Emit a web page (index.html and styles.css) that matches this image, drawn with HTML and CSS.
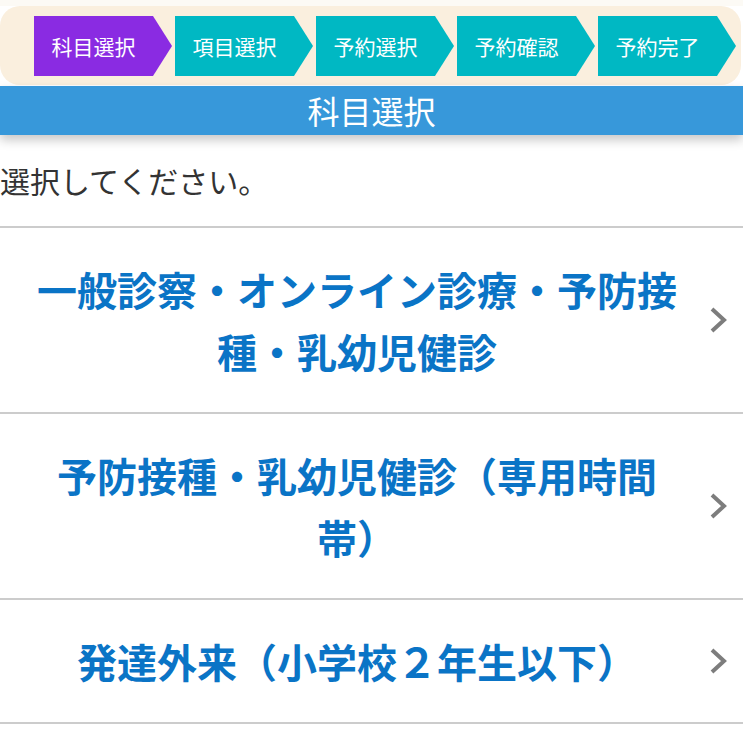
FILE: index.html
```html
<!DOCTYPE html>
<html lang="ja">
<head>
<meta charset="utf-8">
<title>科目選択</title>
<link rel="stylesheet" href="styles.css">
</head>
<body>
<div class="page">
  <div class="steps">
    <div class="step step-active">科目選択</div>
    <div class="step">項目選択</div>
    <div class="step">予約選択</div>
    <div class="step">予約確認</div>
    <div class="step">予約完了</div>
  </div>
  <div class="title-bar">科目選択</div>
  <p class="lead">選択してください。</p>
  <ul class="menu">
    <li class="menu-item">
      <span class="menu-text">一般診察・オンライン診療・予防接種・乳幼児健診</span>
      <span class="menu-arrow"><svg width="17" height="26" viewBox="0 0 17 26"><polyline points="2,2 14,13 2,24" fill="none" stroke="#7d7d7d" stroke-width="4" stroke-linejoin="miter"/></svg></span>
    </li>
    <li class="menu-item">
      <span class="menu-text">予防接種・乳幼児健診（専用時間帯）</span>
      <span class="menu-arrow"><svg width="17" height="26" viewBox="0 0 17 26"><polyline points="2,2 14,13 2,24" fill="none" stroke="#7d7d7d" stroke-width="4" stroke-linejoin="miter"/></svg></span>
    </li>
    <li class="menu-item">
      <span class="menu-text">発達外来（小学校２年生以下）</span>
      <span class="menu-arrow"><svg width="17" height="26" viewBox="0 0 17 26"><polyline points="2,2 14,13 2,24" fill="none" stroke="#7d7d7d" stroke-width="4" stroke-linejoin="miter"/></svg></span>
    </li>
  </ul>
</div>
</body>
</html>
```

FILE: styles.css
```css
* {
  box-sizing: border-box;
}
html, body {
  margin: 0;
  padding: 0;
  background: #ffffff;
}
body {
  font-family: "Noto Sans CJK JP", "Noto Sans", sans-serif;
  color: #333333;
  text-spacing-trim: space-all;
}
.page {
  background: linear-gradient(#fcfaf5 0, #fcfaf5 6px, #ffffff 6px);
  padding-top: 6px;
}
.steps {
  display: flex;
  gap: 3px;
  margin-right: 2px;
  padding: 10px 0 9px 34px;
  background: #faefde;
  border-radius: 20px;
}
.step {
  width: 138px;
  height: 60px;
  padding-right: 19px;
  display: flex;
  align-items: center;
  justify-content: center;
  background: #00b8c3;
  color: #ffffff;
  font-size: 21px;
  clip-path: polygon(0 0, 119px 0, 100% 50%, 119px 100%, 0 100%);
}
.step-active {
  background: #8a2be2;
}
.title-bar {
  margin-top: 1px;
  height: 49px;
  line-height: 49px;
  background: #3798da;
  color: #ffffff;
  font-size: 32px;
  text-align: center;
  box-shadow: 0 5px 10px rgba(0, 0, 0, 0.22);
  position: relative;
}
.lead {
  margin: 0;
  padding: 23px 0 23px 0;
  font-size: 30px;
  line-height: 45px;
  color: #333333;
}
.menu {
  list-style: none;
  margin: 0;
  padding: 0;
}
.menu-item {
  display: flex;
  align-items: center;
  border-top: 2px solid #cccccc;
  padding: 30px 0 30px 20px;
}
.menu-item:last-child {
  border-bottom: 2px solid #cccccc;
}
.menu-text {
  flex: 1;
  text-align: center;
  font-size: 40px;
  line-height: 62px;
  font-weight: bold;
  color: #0a74c6;
  text-spacing-trim: space-all;
}
.menu-arrow {
  width: 49px;
  display: flex;
  justify-content: center;
}
.menu-arrow svg {
  display: block;
}
```
